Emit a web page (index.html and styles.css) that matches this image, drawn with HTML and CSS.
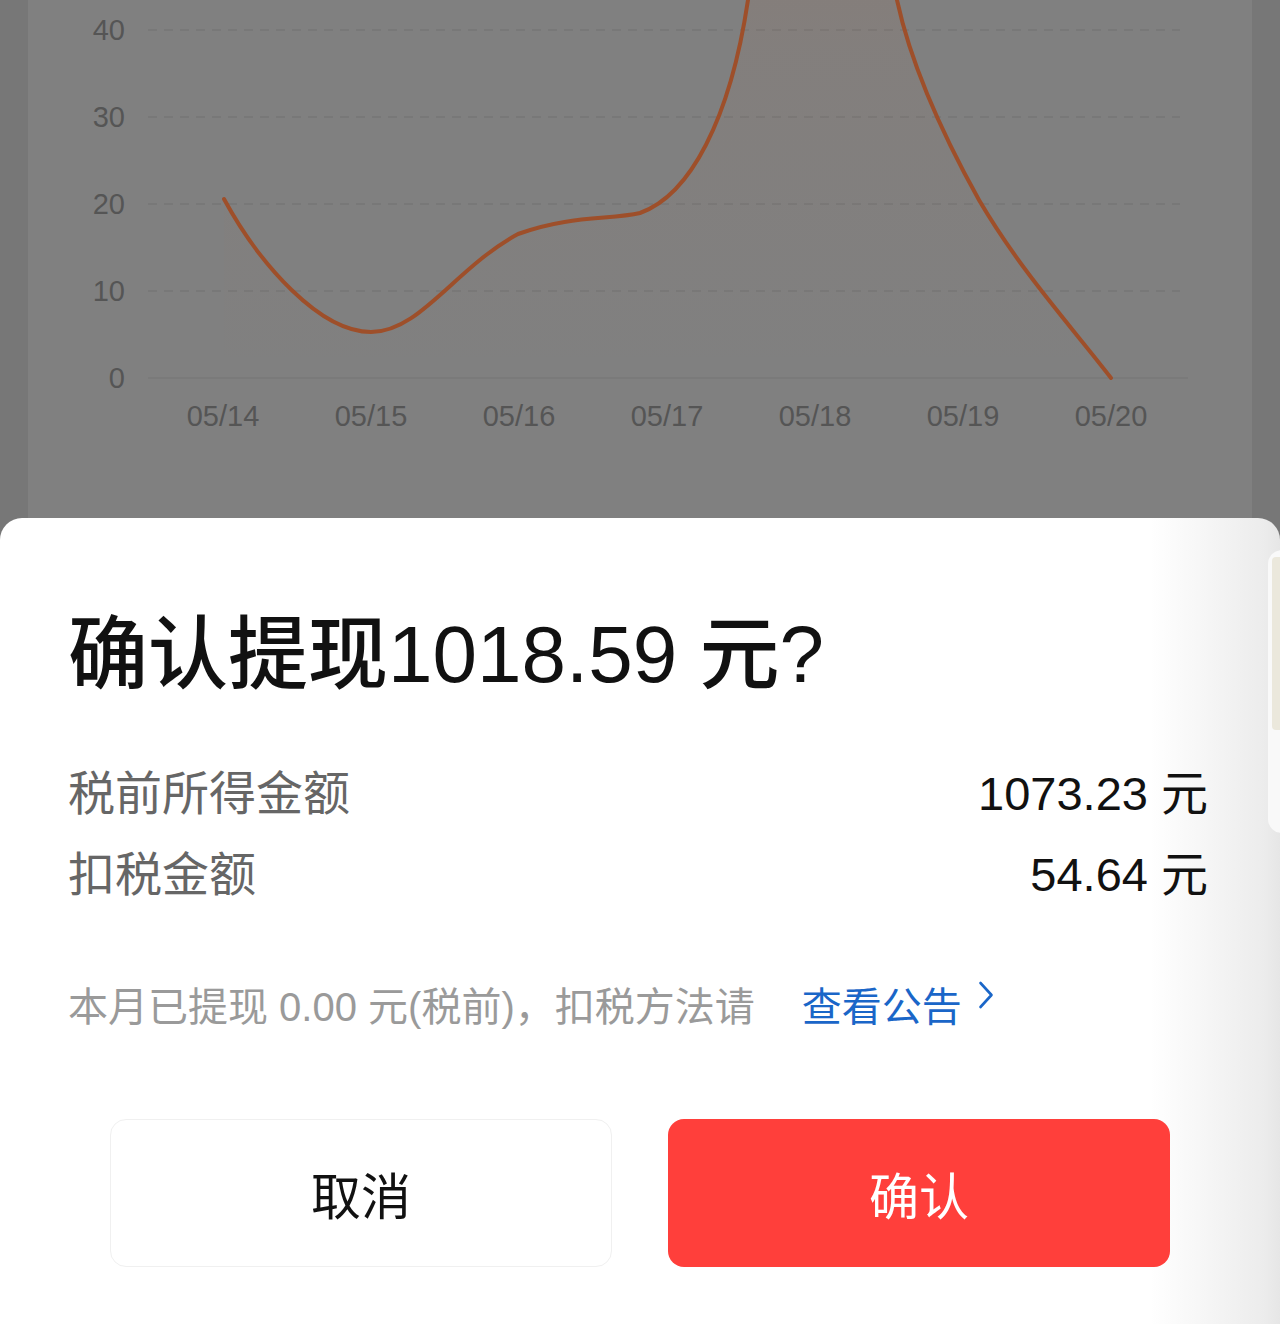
FILE: index.html
```html
<!DOCTYPE html>
<html lang="zh-CN">
<head>
<meta charset="utf-8">
<title>确认提现</title>
<link rel="stylesheet" href="styles.css">
</head>
<body>
<div class="page">
  <div class="card">
    <svg class="chart" viewBox="28 0 1224 520" width="1224" height="520" xmlns="http://www.w3.org/2000/svg">
      <defs>
        <linearGradient id="areaFill" x1="0" y1="0" x2="0" y2="1">
          <stop offset="0" stop-color="#b06a48" stop-opacity="0.22"/>
          <stop offset="0.45" stop-color="#b06a48" stop-opacity="0.06"/>
          <stop offset="1" stop-color="#b06a48" stop-opacity="0"/>
        </linearGradient>
      </defs>
      <g class="grid">
        <line x1="148" y1="30" x2="1180" y2="30"/>
        <line x1="148" y1="117" x2="1180" y2="117"/>
        <line x1="148" y1="204" x2="1180" y2="204"/>
        <line x1="148" y1="291" x2="1180" y2="291"/>
      </g>
      <line class="base" x1="148" y1="378" x2="1188" y2="378"/>
      <path class="area" d="M224,199 C260,265 320,332 371,332 C420,332 455,268 518,234 C570,215 610,220 640,213 C690,195 730,120 748,0 C766,-120 790,-220 815,-220 C845,-220 880,-110 897,0 C910,60 940,130 979,200 C1020,270 1070,325 1111,378 L224,378 Z"/>
      <path class="line" d="M224,199 C260,265 320,332 371,332 C420,332 455,268 518,234 C570,215 610,220 640,213 C690,195 730,120 748,0 C766,-120 790,-220 815,-220 C845,-220 880,-110 897,0 C910,60 940,130 979,200 C1020,270 1070,325 1111,378"/>
      <g class="ylab">
        <text x="125" y="40">40</text>
        <text x="125" y="127">30</text>
        <text x="125" y="214">20</text>
        <text x="125" y="301">10</text>
        <text x="125" y="388">0</text>
      </g>
      <g class="xlab">
        <text x="223" y="426">05/14</text>
        <text x="371" y="426">05/15</text>
        <text x="519" y="426">05/16</text>
        <text x="667" y="426">05/17</text>
        <text x="815" y="426">05/18</text>
        <text x="963" y="426">05/19</text>
        <text x="1111" y="426">05/20</text>
      </g>
    </svg>
  </div>

  <div class="sheet">
    <div class="peek"><div class="peek-inner"></div></div>
    <h1 class="title">确认提现1018.59 元?</h1>
    <div class="rows">
      <div class="row"><span class="label">税前所得金额</span><span class="value">1073.23 元</span></div>
      <div class="row"><span class="label">扣税金额</span><span class="value">54.64 元</span></div>
    </div>
    <p class="note">本月已提现 0.00 元(税前)，扣税方法请<a class="link">查看公告<svg class="chev" width="16" height="28" viewBox="0 0 16 28"><path d="M2.5 2 L13.5 14 L2.5 26" fill="none" stroke="#1a66c8" stroke-width="2.6" stroke-linecap="round" stroke-linejoin="round"/></svg></a></p>
    <div class="actions">
      <button class="btn btn-cancel">取消</button>
      <button class="btn btn-ok">确认</button>
    </div>
  </div>
</div>
</body>
</html>
```

FILE: styles.css
```css
* { box-sizing: border-box; }

html, body {
  margin: 0;
  padding: 0;
}

body {
  width: 1280px;
  height: 1324px;
  overflow: hidden;
  background: #777777;
  font-family: "Liberation Sans", "Noto Sans CJK SC", sans-serif;
}

.page {
  position: relative;
  width: 1280px;
  height: 1324px;
}

.card {
  margin: 0 28px;
  height: 1324px;
  background: #808080;
}

.chart {
  display: block;
}

.grid line {
  stroke: #767676;
  stroke-width: 1.5;
  stroke-dasharray: 9 7;
}

.base {
  stroke: #787878;
  stroke-width: 1.5;
}

.area {
  fill: url(#areaFill);
  stroke: none;
}

.line {
  fill: none;
  stroke: #9e4f2a;
  stroke-width: 4;
  stroke-linecap: round;
}

.ylab text,
.xlab text {
  font-family: "Liberation Sans", Arial, sans-serif;
  font-size: 29px;
  fill: #555555;
}

.ylab text { text-anchor: end; }
.xlab text { text-anchor: middle; }

.sheet {
  position: absolute;
  left: 0;
  top: 518px;
  width: 1280px;
  height: 806px;
  border-radius: 22px 22px 0 0;
  overflow: hidden;
  background: linear-gradient(to right, #ffffff 0, #ffffff 1150px, #ececec 1264px, #e6e6e6 1280px);
  padding: 89px 72px 0 68px;
  display: flex;
  flex-direction: column;
}

.peek {
  position: absolute;
  left: 1268px;
  top: 32px;
  width: 30px;
  height: 283px;
  border-radius: 14px;
  background: #f9f9f9;
  padding: 7px 0 0 4px;
}

.peek-inner {
  height: 173px;
  border-radius: 4px;
  background: #ebe8dc;
}

.title {
  margin: 0;
  font-size: 80px;
  line-height: 96px;
  font-weight: 500;
  color: #111111;
  white-space: nowrap;
}

.rows {
  margin-top: 46px;
  display: flex;
  flex-direction: column;
}

.row {
  display: flex;
  justify-content: space-between;
  align-items: center;
  height: 81px;
  font-size: 47px;
}

.label {
  color: #666666;
}

.value {
  color: #111111;
}

.note {
  margin: 68px 0 0 0;
  font-size: 40px;
  line-height: 56px;
  color: #9a9a9a;
  white-space: nowrap;
}

.link {
  margin-left: 47px;
  color: #1a66c8;
}

.chev {
  margin-left: 16px;
  vertical-align: 12px;
}

.actions {
  margin-top: 84px;
  display: flex;
  justify-content: center;
  gap: 56px;
  padding-left: 4px;
}

.btn {
  width: 502px;
  height: 148px;
  border-radius: 16px;
  font-family: "Liberation Sans", "Noto Sans CJK SC", sans-serif;
  font-size: 50px;
  font-weight: 400;
  cursor: pointer;
}

.btn-cancel {
  background: #ffffff;
  border: 1.5px solid #f0f0f0;
  color: #111111;
}

.btn-ok {
  background: #ff3f3b;
  border: none;
  color: #ffffff;
}
```
